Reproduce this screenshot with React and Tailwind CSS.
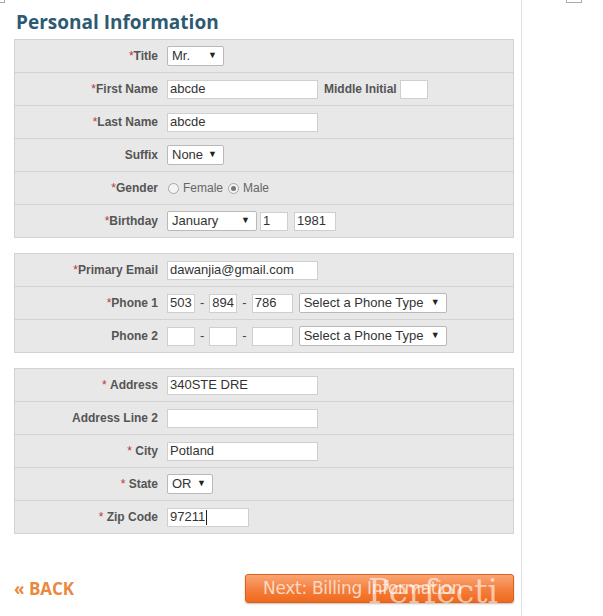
import React from 'react'

const ARIAL = { fontFamily: '"Liberation Sans", Arial, sans-serif' }

function Req({ space }) {
  return <span className="text-[#b5373a] font-normal">*{space ? ' ' : ''}</span>
}

function Row({ label, req, space, children }) {
  return (
    <div className="flex h-[33px] items-center border-t border-[#d2d2d2]">
      <div className="w-[143px] shrink-0 text-right text-[12px] font-bold text-[#555]">
        {req && <Req space={space} />}
        {label}
      </div>
      <div className="ml-[9px] flex items-center">{children}</div>
    </div>
  )
}

function TextBox({ value = '', w, cursor }) {
  return (
    <div
      className="flex h-[19px] items-center border border-[#cfcfcf] bg-white pl-[2px] text-[13px] text-[#333]"
      style={{ width: w }}
    >
      {value}
      {cursor && <span className="ml-px h-[15px] w-px bg-[#222]" />}
    </div>
  )
}

function Select({ value, w }) {
  return (
    <div
      className="flex h-[20px] items-center justify-between rounded-[2px] border border-[#b9b9b9] bg-white pl-[4px] pr-[6px] text-[13px] text-[#333]"
      style={{ width: w }}
    >
      <span>{value}</span>
      <span className="text-[9px] text-[#222]">▼</span>
    </div>
  )
}

function Radio({ checked }) {
  return (
    <span className="flex h-[11px] w-[11px] items-center justify-center rounded-full border border-[#a8a8a8] bg-[#f4f4f4]">
      {checked && <span className="h-[5px] w-[5px] rounded-full bg-[#777]" />}
    </span>
  )
}

function Section({ children }) {
  return (
    <div className="w-[500px] border-x border-b border-[#d2d2d2] bg-[#e8e8e8]">{children}</div>
  )
}

function Dash() {
  return <span className="mx-[5px] text-[13px] text-[#444]">-</span>
}

export default function App() {
  return (
    <div className="relative flex h-[616px] w-[603px] bg-white" style={ARIAL}>
      <div className="absolute left-0 top-0 h-[3px] w-[5px] border-b border-r border-[#aaa]" />
      <div className="absolute left-[566px] top-0 h-[3px] w-[16px] border-b border-l border-r border-[#aaa]" />

      <div className="w-[522px] shrink-0 border-r border-[#e2e2e2] pl-[14px] pt-[9px]">
        <h1
          className="ml-[2px] h-[26px] text-[19px] font-bold leading-[26px] text-[#2d5a73]"
          style={{ fontFamily: '"Open Sans", "DejaVu Sans", sans-serif' }}
        >
          Personal Information
        </h1>

        <div className="mt-[4px]">
          <Section>
            <Row label="Title" req>
              <Select value="Mr." w={57} />
            </Row>
            <Row label="First Name" req>
              <TextBox value="abcde" w={151} />
              <span className="ml-[6px] mr-[3px] text-[12px] font-bold text-[#555]">Middle Initial</span>
              <TextBox w={28} />
            </Row>
            <Row label="Last Name" req>
              <TextBox value="abcde" w={151} />
            </Row>
            <Row label="Suffix">
              <Select value="None" w={57} />
            </Row>
            <Row label="Gender" req>
              <div className="flex items-center text-[12px] text-[#666]">
                <span className="ml-[1px]"><Radio /></span>
                <span className="ml-[4px]">Female</span>
                <span className="ml-[5px]"><Radio checked /></span>
                <span className="ml-[4px]">Male</span>
              </div>
            </Row>
            <Row label="Birthday" req>
              <Select value="January" w={90} />
              <span className="ml-[3px]"><TextBox value="1" w={28} /></span>
              <span className="ml-[6px]"><TextBox value="1981" w={42} /></span>
            </Row>
          </Section>
        </div>

        <div className="mt-[15px]">
          <Section>
            <Row label="Primary Email" req>
              <TextBox value="dawanjia@gmail.com" w={151} />
            </Row>
            <Row label="Phone 1" req>
              <TextBox value="503" w={28} />
              <Dash />
              <TextBox value="894" w={28} />
              <Dash />
              <TextBox value="786" w={41} />
              <span className="ml-[6px]"><Select value="Select a Phone Type" w={148} /></span>
            </Row>
            <Row label="Phone 2">
              <TextBox w={28} />
              <Dash />
              <TextBox w={28} />
              <Dash />
              <TextBox w={41} />
              <span className="ml-[6px]"><Select value="Select a Phone Type" w={148} /></span>
            </Row>
          </Section>
        </div>

        <div className="mt-[15px]">
          <Section>
            <Row label="Address" req space>
              <TextBox value="340STE DRE" w={151} />
            </Row>
            <Row label="Address Line 2">
              <TextBox w={151} />
            </Row>
            <Row label="City" req space>
              <TextBox value="Potland" w={151} />
            </Row>
            <Row label="State" req space>
              <Select value="OR" w={46} />
            </Row>
            <Row label="Zip Code" req space>
              <TextBox value="97211" w={82} cursor />
            </Row>
          </Section>
        </div>

        <div className="mt-[40px] flex w-[500px] items-center justify-between">
          <a
            className="text-[17px] font-bold text-[#e9893d]"
            style={{ fontFamily: '"Open Sans", "DejaVu Sans", sans-serif' }}
          >
            « BACK
          </a>
          <div className="relative">
            <button
              className="h-[29px] w-[269px] rounded-[3px] border border-[#d9611c] bg-gradient-to-b from-[#f9a574] via-[#f4813f] to-[#f0691a] pl-[17px] text-left text-[17px] text-[#fbd9c4] shadow-[0_1px_2px_rgba(0,0,0,0.25)]"
              style={{ fontFamily: '"DejaVu Sans", Verdana, sans-serif', letterSpacing: '-0.3px' }}
            >
              Next: Billing Information
            </button>
            <span
              className="pointer-events-none absolute left-[123px] top-[-7px] text-[33px] font-normal text-white/60"
              style={{ fontFamily: '"DejaVu Serif", "Liberation Serif", serif' }}
            >
              Perfecti
            </span>
          </div>
        </div>
      </div>
    </div>
  )
}
